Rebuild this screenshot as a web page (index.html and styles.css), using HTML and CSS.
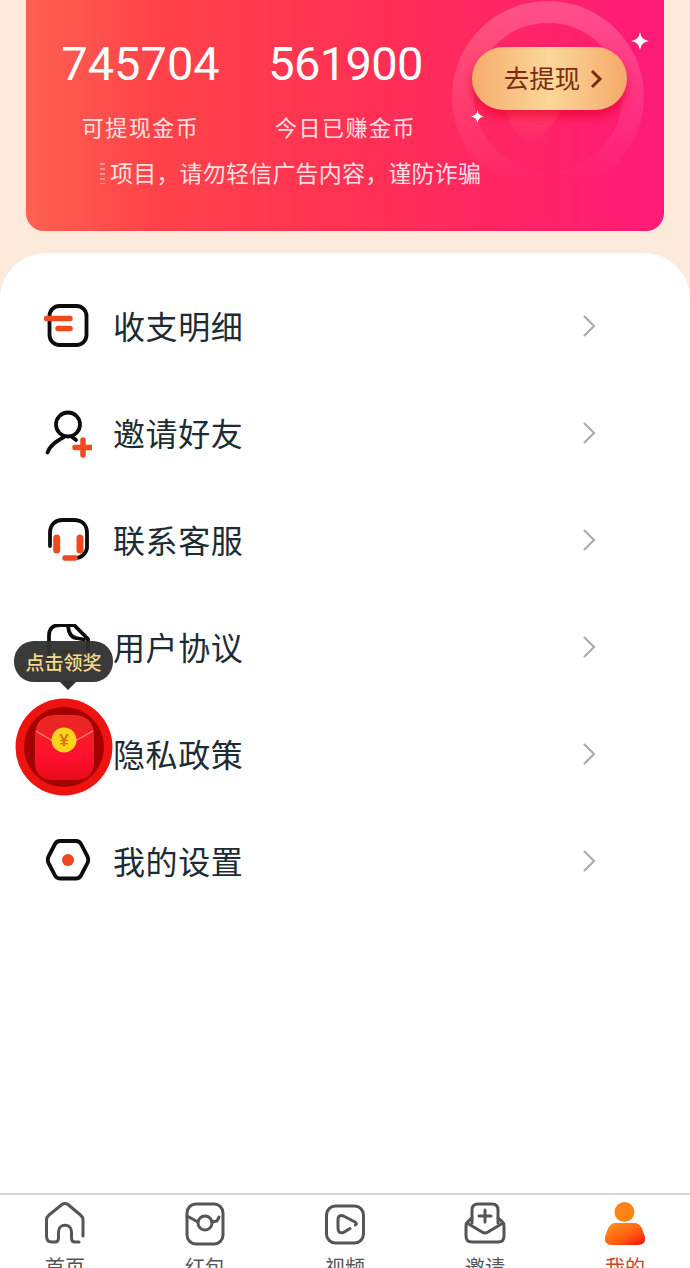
FILE: index.html
```html
<html>
  <head>
    <meta charset="utf-8">
    <link rel="stylesheet" href="styles.css">
  </head>
  <body>
    <div class="card">
      <svg class="ring" width="220" height="220" viewBox="0 0 220 220">
        <defs>
          <linearGradient id="ringfade" x1="0" y1="0" x2="0" y2="1">
            <stop offset="0" stop-color="#ffffff" stop-opacity="0.2"/>
            <stop offset="0.55" stop-color="#ffffff" stop-opacity="0.09"/>
            <stop offset="1" stop-color="#ffffff" stop-opacity="0"/>
          </linearGradient>
          <linearGradient id="heartfade" x1="0" y1="0" x2="0" y2="1">
            <stop offset="0" stop-color="#ff7a6a" stop-opacity="0.35"/>
            <stop offset="1" stop-color="#ff7a6a" stop-opacity="0"/>
          </linearGradient>
        </defs>
        <circle cx="110" cy="110" r="85" fill="none" stroke="url(#ringfade)" stroke-width="22"/>
        <path d="M65 115 H125 Q120 140 90 158 Q70 140 65 115 Z" fill="url(#heartfade)"/>
      </svg>
      <svg class="spark spark-big" width="18" height="18" viewBox="0 0 18 18"><path d="M9 0 Q10 8 18 9 Q10 10 9 18 Q8 10 0 9 Q8 8 9 0 Z"/></svg>
      <svg class="spark spark-small" width="13" height="13" viewBox="0 0 18 18"><path d="M9 0 Q10 8 18 9 Q10 10 9 18 Q8 10 0 9 Q8 8 9 0 Z"/></svg>
      <div class="stats">
        <div class="stat">
          <div class="stat-num">745704</div>
          <div class="stat-label">可提现金币</div>
        </div>
        <div class="stat">
          <div class="stat-num stat-num-tight">561900</div>
          <div class="stat-label">今日已赚金币</div>
        </div>
      </div>
      <div class="withdraw">
        <span class="withdraw-text">去提现</span>
        <svg width="14" height="22" viewBox="0 0 14 22"><path d="M3 3 L11 11 L3 19" fill="none" stroke="#7a2b10" stroke-width="3"/></svg>
      </div>
      <div class="notice"><span class="notice-cut"></span><span>项目，请勿轻信广告内容，谨防诈骗</span></div>
    </div>

    <div class="sheet">
      <div class="row">
        <svg class="row-icon" width="48" height="48" viewBox="0 0 48 48">
          <rect x="5.5" y="3" width="37" height="39" rx="10" class="ink"/>
          <path d="M2.5 15.5 H26 M14 25.5 H26" class="hot"/>
        </svg>
        <span class="row-text">收支明细</span>
        <svg class="chev" width="14" height="24" viewBox="0 0 14 24"><path d="M2 2 L12 12 L2 22"/></svg>
      </div>
      <div class="row">
        <svg class="row-icon" width="48" height="48" viewBox="0 0 48 48">
          <circle cx="24" cy="14.5" r="12" class="ink"/>
          <path d="M3.5 42.5 C6 35 13 31 20 27 M28 27 C29.5 28 31 29 32 30" class="ink"/>
          <path d="M31 37.5 H47 M39 30 V45" class="hot"/>
        </svg>
        <span class="row-text">邀请好友</span>
        <svg class="chev" width="14" height="24" viewBox="0 0 14 24"><path d="M2 2 L12 12 L2 22"/></svg>
      </div>
      <div class="row">
        <svg class="row-icon" width="48" height="48" viewBox="0 0 48 48">
          <path d="M6 29 V16 C6 7 12 3 18 3 H30 C37 3 43 7 43 16 V31 C42 37 37 41 31 41" class="ink"/>
          <path d="M12.7 21 V33 M36 21 V33" class="pad"/>
          <path d="M21 41 H31" class="hot"/>
        </svg>
        <span class="row-text">联系客服</span>
        <svg class="chev" width="14" height="24" viewBox="0 0 14 24"><path d="M2 2 L12 12 L2 22"/></svg>
      </div>
      <div class="row">
        <svg class="row-icon" width="48" height="48" viewBox="0 0 48 48">
          <path d="M5 42 V12 Q5 1 16 1 H30 L44 15 V42" class="ink"/>
          <path d="M24 2 Q25 13 32 14 L40 15.5" class="ink"/>
          <path d="M18 28 H30" class="hot"/>
        </svg>
        <span class="row-text">用户协议</span>
        <svg class="chev" width="14" height="24" viewBox="0 0 14 24"><path d="M2 2 L12 12 L2 22"/></svg>
      </div>
      <div class="row">
        <svg class="row-icon" width="48" height="48" viewBox="0 0 48 48"></svg>
        <span class="row-text">隐私政策</span>
        <svg class="chev" width="14" height="24" viewBox="0 0 14 24"><path d="M2 2 L12 12 L2 22"/></svg>
      </div>
      <div class="row">
        <svg class="row-icon" width="48" height="48" viewBox="0 0 48 48">
          <path d="M16 3 H32 Q35.5 3 37 6 L43.5 18.5 Q45 22 43.5 25 L37 37.5 Q35.5 40.5 32 40.5 H16 Q12.5 40.5 11 37.5 L4.5 25 Q3 22 4.5 18.5 L11 6 Q12.5 3 16 3 Z" class="ink"/>
          <circle cx="24" cy="22" r="6" fill="#f0431f"/>
        </svg>
        <span class="row-text">我的设置</span>
        <svg class="chev" width="14" height="24" viewBox="0 0 14 24"><path d="M2 2 L12 12 L2 22"/></svg>
      </div>
    </div>

    <div class="reward">
      <div class="reward-tip">点击领奖</div>
      <svg class="reward-pack" width="98" height="98" viewBox="0 0 98 98">
        <defs>
          <linearGradient id="pack" x1="0" y1="0" x2="0" y2="1">
            <stop offset="0" stop-color="#e82a22"/>
            <stop offset="0.65" stop-color="#ff1030"/>
            <stop offset="1" stop-color="#e80a18"/>
          </linearGradient>
        </defs>
        <circle cx="49" cy="49" r="48.5" fill="#ee1210"/>
        <circle cx="49" cy="49" r="40" fill="#a40000"/>
        <path d="M20 38 Q20 17 41 17 H58 Q79 17 79 38 V64 Q79 82 61 82 H38 Q20 82 20 64 Z" fill="url(#pack)"/>
        <path d="M21 33 L38 43 M60 43 L78 33" fill="none" stroke="#ff8a6a" stroke-width="1.2"/>
        <circle cx="49" cy="42" r="12.5" fill="#fcd41c"/>
        <text x="49" y="48" class="reward-yen">¥</text>
      </svg>
    </div>

    <div class="nav">
      <div class="nav-item">
        <svg width="46" height="46" viewBox="0 0 46 46">
          <path d="M41 35 V19 Q41 16 38.5 14 L26 3.5 Q23 1.5 20 3.5 L7 14 Q4.5 16 4.5 19 V35 Q4.5 41 10 41 H13 Q16.5 41 16.5 37 V31 C16.5 22 29.5 22 29.5 31 V37 Q29.5 41 33 41 H37" class="line"/>
        </svg>
        <span>首页</span>
      </div>
      <div class="nav-item">
        <svg width="46" height="46" viewBox="0 0 46 46">
          <rect x="5" y="3" width="36" height="40" rx="9" class="line"/>
          <circle cx="23" cy="22" r="7" class="line"/>
          <path d="M5 15 L16 21 M30 21 L35 20 L37 16" class="line"/>
        </svg>
        <span>红包</span>
      </div>
      <div class="nav-item">
        <svg width="46" height="46" viewBox="0 0 46 46">
          <rect x="4.5" y="5" width="37" height="37" rx="9" class="line"/>
          <path d="M28 27.5 L21.5 31.5 Q16 33 16 27 V19 Q16 13 21.5 15 L33 21 Q35.5 22.5 33.5 24" class="line"/>
        </svg>
        <span>视频</span>
      </div>
      <div class="nav-item">
        <svg width="46" height="46" viewBox="0 0 46 46">
          <path d="M10 17 L6.5 20 Q4 22 4 25 V35 Q4 41 10 41 H36 Q42 41 42 35 V25 Q42 22 39.5 20 L36 17" class="line"/>
          <path d="M10 22 V9 Q10 3 16 3 H30 Q36 3 36 9 V22" class="line"/>
          <path d="M5 22 L20 31 Q23 33 26 31 L41 22" class="line"/>
          <path d="M23 9 V21 M17 15 H29" class="line"/>
        </svg>
        <span>邀请</span>
      </div>
      <div class="nav-item nav-on">
        <svg width="46" height="46" viewBox="0 0 46 46">
          <defs>
            <linearGradient id="me" x1="0" y1="0" x2="1" y2="1">
              <stop offset="0" stop-color="#ff9a1e"/>
              <stop offset="0.6" stop-color="#ff5a10"/>
              <stop offset="1" stop-color="#f01010"/>
            </linearGradient>
          </defs>
          <circle cx="22.5" cy="11" r="10" fill="#fb8414"/>
          <path d="M13 22 H33 Q38 22 41 30 L43 36 Q44 44 36 44 H10 Q2 44 3 36 L5 30 Q8 22 13 22 Z" fill="url(#me)"/>
        </svg>
        <span>我的</span>
      </div>
    </div>
  </body>
</html>
```
FILE: styles.css
```css
body {
  margin: 0;
  width: 690px;
  height: 1268px;
  overflow: hidden;
  position: relative;
  display: flex;
  flex-direction: column;
  background: #fdeadb;
  font-family: "Noto Sans CJK SC", "Noto Sans", sans-serif;
}
.card {
  position: relative;
  overflow: hidden;
  flex: none;
  box-sizing: border-box;
  height: 251px;
  margin: -20px 26px 0;
  padding-top: 56px;
  border-radius: 18px;
  background: linear-gradient(to right, #fd6150, #ff4349 20%, #ff2f55 55%, #ff1a78);
  display: grid;
  grid-template-columns: 446px 1fr;
  align-content: start;
  color: white;
}
.ring {
  position: absolute;
  left: 412px;
  top: 7px;
}
.spark {
  position: absolute;
  fill: white;
}
.spark-big {
  left: 605px;
  top: 52px;
}
.spark-small {
  left: 445px;
  top: 130px;
}
.stats {
  position: relative;
  display: grid;
  grid-template-columns: 205px 205px;
  padding-left: 12px;
}
.stat {
  text-align: center;
}
.stat-num {
  font-family: Roboto, sans-serif;
  font-size: 47px;
  line-height: 56px;
  margin-bottom: 17px;
}
.stat-num-tight {
  letter-spacing: -0.7px;
}
.stat-label {
  font-size: 22px;
  line-height: 34px;
  letter-spacing: 1.5px;
  opacity: 0.85;
}
.withdraw {
  position: relative;
  box-sizing: border-box;
  width: 155px;
  height: 63px;
  margin-top: 11px;
  padding-left: 8px;
  border-radius: 32px;
  display: flex;
  align-items: center;
  justify-content: center;
  gap: 9px;
  color: #7a2b10;
  font-size: 25.5px;
  background: linear-gradient(to right, #f6ab6c, #fbd898 50%, #f5a96a);
  box-shadow: 0 7px 10px rgba(230, 0, 40, 0.6);
}
.withdraw-text {
  margin-bottom: 5px;
}
.notice {
  position: relative;
  grid-column: 1 / 3;
  margin-top: 12px;
  padding-left: 74px;
  display: flex;
  font-size: 23px;
  letter-spacing: 0.2px;
  line-height: 34px;
  color: rgba(255, 255, 255, 0.85);
}
.notice-cut {
  width: 5px;
  height: 21px;
  margin: 8px 5px 0 0;
  background: repeating-linear-gradient(rgba(255, 255, 255, 0.4) 0 2px, transparent 2px 5px);
}
.sheet {
  flex: 1;
  margin-top: 22px;
  padding-top: 20px;
  border-radius: 46px 46px 0 0;
  background: white;
}
.row {
  height: 107px;
  padding: 0 94px 0 44px;
  display: flex;
  align-items: center;
}
.row-icon {
  flex: none;
  margin-right: 21px;
}
.row-text {
  flex: 1;
  padding-bottom: 3px;
  font-size: 32px;
  letter-spacing: 0.6px;
  color: #1d2b33;
}
.chev {
  margin-bottom: 2px;
  fill: none;
  stroke: #a9adb0;
  stroke-width: 2.2;
}
.ink {
  fill: none;
  stroke: #0c0c0c;
  stroke-width: 3.8;
  stroke-linecap: round;
  stroke-linejoin: round;
}
.hot {
  fill: none;
  stroke: #ee4a1e;
  stroke-width: 5.5;
  stroke-linecap: round;
}
.pad {
  fill: none;
  stroke: #ee4a1e;
  stroke-width: 7;
  stroke-linecap: round;
}
.reward {
  position: absolute;
  left: 14px;
  top: 641px;
  width: 99px;
  display: flex;
  flex-direction: column;
  align-items: center;
}
.reward-tip {
  position: relative;
  width: 99px;
  height: 41px;
  border-radius: 20px;
  background: rgba(50, 50, 50, 0.96);
  color: #f5d98a;
  font-size: 19px;
  font-weight: 500;
  line-height: 41px;
  text-align: center;
}
.reward-tip::after {
  content: "";
  position: absolute;
  left: 45px;
  bottom: -8px;
  border-left: 9px solid transparent;
  border-right: 9px solid transparent;
  border-top: 9px solid #323232;
}
.reward-pack {
  margin-top: 16px;
}
.reward-yen {
  font-family: "Liberation Sans", sans-serif;
  font-size: 17px;
  font-weight: bold;
  text-anchor: middle;
  fill: #d8701a;
}
.nav {
  flex: none;
  height: 75px;
  overflow: hidden;
  box-sizing: border-box;
  border-top: 2px solid #d8d8d8;
  padding-top: 6px;
  background: white;
  display: grid;
  grid-template-columns: repeat(5, 140px);
  justify-content: center;
}
.nav-item {
  display: flex;
  flex-direction: column;
  align-items: center;
  color: #555;
  font-size: 20px;
  line-height: 24px;
}
.nav-item svg {
  flex: none;
  margin-bottom: 8px;
}
.nav-on {
  color: #c8452a;
}
.line {
  fill: none;
  stroke: #555;
  stroke-width: 3;
  stroke-linecap: round;
  stroke-linejoin: round;
}
```
